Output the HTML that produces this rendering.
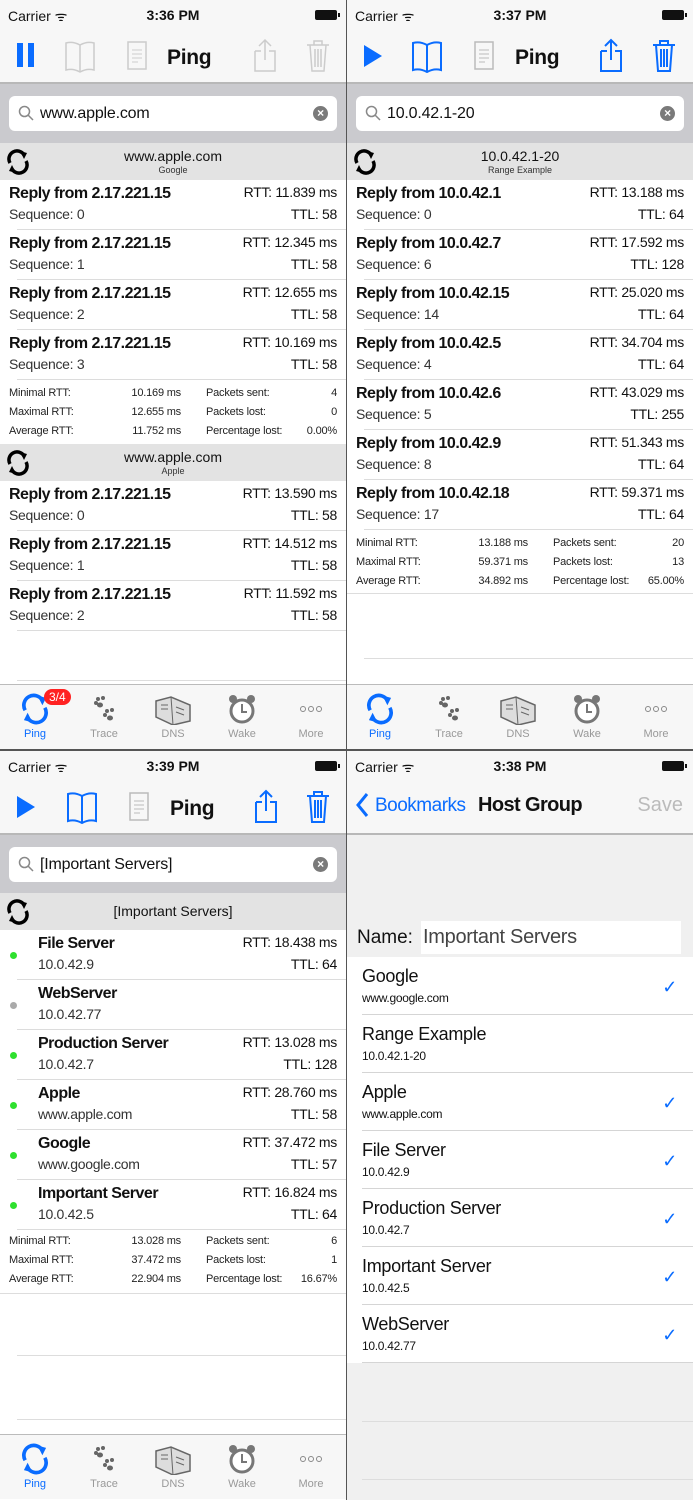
<!DOCTYPE html>
<html><head><meta charset="utf-8"><style>
*{margin:0;padding:0;box-sizing:border-box}
body{width:693px;height:1500px;background:#555;position:relative;overflow:hidden;font-family:"Liberation Sans",sans-serif;color:#111}
.p{position:absolute;width:346px;height:749px;overflow:hidden;background:#fff}
.a{position:absolute}
.sb{position:absolute;left:0;top:0;width:100%;height:30px;background:#f7f7f7;font-size:14px}
.sb .c{position:absolute;left:8px;top:7px}
.sb .t{position:absolute;left:0;width:100%;text-align:center;top:7px;font-weight:bold}
.sb .bat{position:absolute;right:9px;top:10px;width:22px;height:10px;background:#111;border-radius:2px}
.sb .bat:after{content:"";position:absolute;right:-3px;top:3px;width:2px;height:4px;background:#111}
.tb{position:absolute;left:0;top:30px;width:100%;height:54px;background:#f7f7f7;border-bottom:2px solid #b8b8b8}
.ttl{position:absolute;top:16px;font-size:21px;font-weight:bold;letter-spacing:-0.3px}
.sr{position:absolute;left:0;top:84px;width:100%;height:59px;background:#cacace}
.sf{position:absolute;left:9px;right:9px;top:12px;height:35px;background:#fff;border-radius:6px;font-size:16px;letter-spacing:-0.2px}
.sf span{position:absolute;left:31px;top:9px}
.x{position:absolute;right:9px;top:10px;width:15px;height:15px;border-radius:50%;background:#7a7a7a;color:#fff;font-size:12px;line-height:15px;text-align:center;font-weight:bold}
.hd{position:absolute;left:0;width:100%;height:37px;background:#e3e3e3;text-align:center}
.hd .h1{font-size:14px;padding-top:5px}
.hd .h2{font-size:9px;color:#333;margin-top:1px}
.hd svg{position:absolute;left:6px;top:6px}
.r{position:absolute;left:0;width:100%;height:50px;border-bottom:1px solid #dcdcdc;letter-spacing:-0.3px}
.r:after{content:"";position:absolute;left:0;bottom:-1px;width:17px;height:1px;background:#fff}
.r .l1{position:absolute;left:9px;top:5px;font-size:16px;font-weight:bold;letter-spacing:-0.5px}
.r .l2{position:absolute;left:9px;top:26px;font-size:14px;color:#333}
.r .r1{position:absolute;right:9px;top:4px;font-size:14px}
.r .r2{position:absolute;right:9px;top:26px;font-size:14px}
.r .dot{position:absolute;left:10px;top:22px;width:7px;height:7px;border-radius:50%;background:#2ee02e}
.st{position:absolute;left:0;width:100%;height:64px;font-size:11px;color:#222;border-bottom:1px solid #ddd;letter-spacing:-0.2px}
.st div{position:absolute}
.ln{position:absolute;left:17px;right:0;height:1px;background:#ddd}
.tab{position:absolute;left:0;width:100%;height:65px;background:#f7f7f7;border-top:1px solid #bbb}
.ti{position:absolute;top:8px;width:60px;margin-left:-30px;text-align:center;font-size:11px;color:#999}
.ti svg{display:block;margin:0 auto 3px;height:32px}
.ti.on{color:#0a6cff}
.badge{position:absolute;left:44px;top:4px;background:#f22;color:#fff;font-size:12px;border-radius:9px;padding:1px 5px}
.nl{position:absolute;left:0;width:100%;height:58px;background:#fff;letter-spacing:-0.3px}
.nl:after{content:"";position:absolute;left:15px;right:0;bottom:0;height:1px;background:#d5d5d5}
.nl .n{position:absolute;left:15px;top:9px;font-size:18px}
.nl .s{position:absolute;left:15px;top:34px;font-size:12px}
.nl .ck{position:absolute;right:16px;top:20px;color:#0a6cff;font-size:18px}
</style></head><body>

<!-- TOP LEFT -->
<div class="p" style="left:0;top:0">
 <div class="sb"><span class="c">Carrier ᯤ</span><span class="t">3:36 PM</span><span class="bat"></span></div>
 <div class="tb">
  <div class="a" style="left:17px;top:13px;width:6px;height:24px;background:#0a6cff"></div>
  <div class="a" style="left:28px;top:13px;width:6px;height:24px;background:#0a6cff"></div>
  <svg class="a" style="left:64px;top:9px" width="32" height="34" viewBox="0 0 32 34"><path d="M16 6 Q9 2 2 4 V31 Q9 29 16 33 Q23 29 30 31 V4 Q23 2 16 6 V33" fill="none" stroke="#ccc" stroke-width="1.5"/></svg>
  <svg class="a" style="left:127px;top:10px" width="20" height="30"><rect x="1" y="2" width="18" height="27" fill="none" stroke="#ccc" stroke-width="1.5"/><path d="M5 10h10M5 14h10M5 18h10M5 22h6" stroke="#ccc"/></svg>
  <div class="ttl" style="left:167px">Ping</div>
  <svg class="a" style="left:253px;top:8px" width="24" height="34"><path d="M2 13h6M16 13h6v20H2V13M12 2v20M6 8l6-6 6 6" fill="none" stroke="#ccc" stroke-width="1.5"/></svg>
  <svg class="a" style="left:306px;top:8px" width="24" height="34"><path d="M1 7h22M8 7V3h8v4M4 7l2 26h12l2-26M9 11v18M12 11v18M15 11v18" fill="none" stroke="#ccc" stroke-width="1.5"/></svg>
 </div>
 <div class="sr"><div class="sf"><svg class="a" style="left:9px;top:9px" width="16" height="16"><circle cx="6.5" cy="6.5" r="5" fill="none" stroke="#888" stroke-width="1.5"/><path d="M10 10l5 5" stroke="#888" stroke-width="1.5"/></svg><span>www.apple.com</span><div class="x">×</div></div></div>
 <div class="hd" style="top:143px"><svg width="24" height="26" viewBox="0 0 24 26"><path d="M4 14 A8 8 0 0 1 18 6 M20 12 A8 8 0 0 1 6 20" fill="none" stroke="#000" stroke-width="3.5"/><path d="M14 2 L21 4 L18 10Z M10 24 L3 22 L6 16Z"/></svg><div class="h1">www.apple.com</div><div class="h2">Google</div></div>
 <div class="r" style="top:180px"><div class="l1">Reply from 2.17.221.15</div><div class="l2">Sequence: 0</div><div class="r1">RTT: 11.839 ms</div><div class="r2">TTL: 58</div></div>
 <div class="r" style="top:230px"><div class="l1">Reply from 2.17.221.15</div><div class="l2">Sequence: 1</div><div class="r1">RTT: 12.345 ms</div><div class="r2">TTL: 58</div></div>
 <div class="r" style="top:280px"><div class="l1">Reply from 2.17.221.15</div><div class="l2">Sequence: 2</div><div class="r1">RTT: 12.655 ms</div><div class="r2">TTL: 58</div></div>
 <div class="r" style="top:330px"><div class="l1">Reply from 2.17.221.15</div><div class="l2">Sequence: 3</div><div class="r1">RTT: 10.169 ms</div><div class="r2">TTL: 58</div></div>
 <div class="st" style="top:380px;border:0">
  <div style="left:9px;top:7px">Minimal RTT:</div><div style="right:165px;top:7px">10.169 ms</div><div style="left:206px;top:7px">Packets sent:</div><div style="right:9px;top:7px">4</div>
  <div style="left:9px;top:26px">Maximal RTT:</div><div style="right:165px;top:26px">12.655 ms</div><div style="left:206px;top:26px">Packets lost:</div><div style="right:9px;top:26px">0</div>
  <div style="left:9px;top:45px">Average RTT:</div><div style="right:165px;top:45px">11.752 ms</div><div style="left:206px;top:45px">Percentage lost:</div><div style="right:9px;top:45px">0.00%</div>
 </div>
 <div class="hd" style="top:444px"><svg width="24" height="26" viewBox="0 0 24 26"><path d="M4 14 A8 8 0 0 1 18 6 M20 12 A8 8 0 0 1 6 20" fill="none" stroke="#000" stroke-width="3.5"/><path d="M14 2 L21 4 L18 10Z M10 24 L3 22 L6 16Z"/></svg><div class="h1">www.apple.com</div><div class="h2">Apple</div></div>
 <div class="r" style="top:481px"><div class="l1">Reply from 2.17.221.15</div><div class="l2">Sequence: 0</div><div class="r1">RTT: 13.590 ms</div><div class="r2">TTL: 58</div></div>
 <div class="r" style="top:531px"><div class="l1">Reply from 2.17.221.15</div><div class="l2">Sequence: 1</div><div class="r1">RTT: 14.512 ms</div><div class="r2">TTL: 58</div></div>
 <div class="r" style="top:581px"><div class="l1">Reply from 2.17.221.15</div><div class="l2">Sequence: 2</div><div class="r1">RTT: 11.592 ms</div><div class="r2">TTL: 58</div></div>
 <div class="ln" style="top:680px"></div>
 <div class="tab" style="top:684px">
  <div class="ti on" style="left:35px"><svg width="30" height="32" viewBox="0 0 24 26"><path d="M4 14 A8 8 0 0 1 18 6 M20 12 A8 8 0 0 1 6 20" fill="none" stroke="#0a6cff" stroke-width="3"/><path d="M14 2 L21 4 L18 10Z M10 24 L3 22 L6 16Z" fill="#0a6cff"/></svg>Ping</div>
  <div class="badge">3/4</div>
  <div class="ti" style="left:104px"><svg width="30" height="32"><g fill="#666"><circle cx="9" cy="6" r="2"/><circle cx="14" cy="5" r="2"/><circle cx="7" cy="10" r="2"/><ellipse cx="11" cy="12" rx="3" ry="2.5"/><circle cx="18" cy="18" r="2"/><circle cx="23" cy="17" r="2"/><circle cx="16" cy="22" r="2"/><ellipse cx="21" cy="25" rx="3" ry="2.5"/></g></svg>Trace</div>
  <div class="ti" style="left:173px"><svg width="40" height="32"><path d="M3 8 L18 4 L37 12 L37 28 L20 32 L3 24Z" fill="#ddd" stroke="#666" stroke-width="1.5"/><path d="M18 4 L20 32 M8 12h7M8 16h7M23 14l8 3M23 19l8 3" stroke="#666"/></svg>DNS</div>
  <div class="ti" style="left:242px"><svg width="30" height="32"><circle cx="15" cy="18" r="11" fill="#fff" stroke="#777" stroke-width="3"/><circle cx="6" cy="6" r="4" fill="#777"/><circle cx="24" cy="6" r="4" fill="#777"/><path d="M15 11v8h5" stroke="#777" stroke-width="2" fill="none"/></svg>Wake</div>
  <div class="ti" style="left:311px"><svg width="30" height="32"><g fill="none" stroke="#888"><circle cx="7" cy="16" r="2.5"/><circle cx="15" cy="16" r="2.5"/><circle cx="23" cy="16" r="2.5"/></g></svg>More</div>
 </div>
</div>

<!-- TOP RIGHT -->
<div class="p" style="left:347px;top:0">
 <div class="sb"><span class="c">Carrier ᯤ</span><span class="t">3:37 PM</span><span class="bat"></span></div>
 <div class="tb">
  <svg class="a" style="left:16px;top:14px" width="20" height="24"><path d="M1 1L19 12L1 23Z" fill="#0a6cff"/></svg>
  <svg class="a" style="left:64px;top:9px" width="32" height="34" viewBox="0 0 32 34"><path d="M16 6 Q9 2 2 4 V31 Q9 29 16 33 Q23 29 30 31 V4 Q23 2 16 6 V33" fill="none" stroke="#0a6cff" stroke-width="2"/></svg>
  <svg class="a" style="left:127px;top:10px" width="20" height="30"><rect x="1" y="2" width="18" height="27" fill="none" stroke="#bbb" stroke-width="1.5"/><path d="M5 10h10M5 14h10M5 18h10M5 22h6" stroke="#bbb"/></svg>
  <div class="ttl" style="left:168px">Ping</div>
  <svg class="a" style="left:252px;top:8px" width="24" height="34"><path d="M2 13h6M16 13h6v20H2V13M12 2v20M6 8l6-6 6 6" fill="none" stroke="#0a6cff" stroke-width="2"/></svg>
  <svg class="a" style="left:305px;top:8px" width="24" height="34"><path d="M1 7h22M8 7V3h8v4M4 7l2 26h12l2-26M9 11v18M12 11v18M15 11v18" fill="none" stroke="#0a6cff" stroke-width="2"/></svg>
 </div>
 <div class="sr"><div class="sf"><svg class="a" style="left:9px;top:9px" width="16" height="16"><circle cx="6.5" cy="6.5" r="5" fill="none" stroke="#888" stroke-width="1.5"/><path d="M10 10l5 5" stroke="#888" stroke-width="1.5"/></svg><span>10.0.42.1-20</span><div class="x">×</div></div></div>
 <div class="hd" style="top:143px"><svg width="24" height="26" viewBox="0 0 24 26"><path d="M4 14 A8 8 0 0 1 18 6 M20 12 A8 8 0 0 1 6 20" fill="none" stroke="#000" stroke-width="3.5"/><path d="M14 2 L21 4 L18 10Z M10 24 L3 22 L6 16Z"/></svg><div class="h1">10.0.42.1-20</div><div class="h2">Range Example</div></div>
 <div class="r" style="top:180px"><div class="l1">Reply from 10.0.42.1</div><div class="l2">Sequence: 0</div><div class="r1">RTT: 13.188 ms</div><div class="r2">TTL: 64</div></div>
 <div class="r" style="top:230px"><div class="l1">Reply from 10.0.42.7</div><div class="l2">Sequence: 6</div><div class="r1">RTT: 17.592 ms</div><div class="r2">TTL: 128</div></div>
 <div class="r" style="top:280px"><div class="l1">Reply from 10.0.42.15</div><div class="l2">Sequence: 14</div><div class="r1">RTT: 25.020 ms</div><div class="r2">TTL: 64</div></div>
 <div class="r" style="top:330px"><div class="l1">Reply from 10.0.42.5</div><div class="l2">Sequence: 4</div><div class="r1">RTT: 34.704 ms</div><div class="r2">TTL: 64</div></div>
 <div class="r" style="top:380px"><div class="l1">Reply from 10.0.42.6</div><div class="l2">Sequence: 5</div><div class="r1">RTT: 43.029 ms</div><div class="r2">TTL: 255</div></div>
 <div class="r" style="top:430px"><div class="l1">Reply from 10.0.42.9</div><div class="l2">Sequence: 8</div><div class="r1">RTT: 51.343 ms</div><div class="r2">TTL: 64</div></div>
 <div class="r" style="top:480px"><div class="l1">Reply from 10.0.42.18</div><div class="l2">Sequence: 17</div><div class="r1">RTT: 59.371 ms</div><div class="r2">TTL: 64</div></div>
 <div class="st" style="top:530px">
  <div style="left:9px;top:7px">Minimal RTT:</div><div style="right:165px;top:7px">13.188 ms</div><div style="left:206px;top:7px">Packets sent:</div><div style="right:9px;top:7px">20</div>
  <div style="left:9px;top:26px">Maximal RTT:</div><div style="right:165px;top:26px">59.371 ms</div><div style="left:206px;top:26px">Packets lost:</div><div style="right:9px;top:26px">13</div>
  <div style="left:9px;top:45px">Average RTT:</div><div style="right:165px;top:45px">34.892 ms</div><div style="left:206px;top:45px">Percentage lost:</div><div style="right:9px;top:45px">65.00%</div>
 </div>
 <div class="ln" style="top:658px"></div>
 <div class="tab" style="top:684px">
  <div class="ti on" style="left:33px"><svg width="30" height="32" viewBox="0 0 24 26"><path d="M4 14 A8 8 0 0 1 18 6 M20 12 A8 8 0 0 1 6 20" fill="none" stroke="#0a6cff" stroke-width="3"/><path d="M14 2 L21 4 L18 10Z M10 24 L3 22 L6 16Z" fill="#0a6cff"/></svg>Ping</div>
  <div class="ti" style="left:102px"><svg width="30" height="32"><g fill="#666"><circle cx="9" cy="6" r="2"/><circle cx="14" cy="5" r="2"/><circle cx="7" cy="10" r="2"/><ellipse cx="11" cy="12" rx="3" ry="2.5"/><circle cx="18" cy="18" r="2"/><circle cx="23" cy="17" r="2"/><circle cx="16" cy="22" r="2"/><ellipse cx="21" cy="25" rx="3" ry="2.5"/></g></svg>Trace</div>
  <div class="ti" style="left:171px"><svg width="40" height="32"><path d="M3 8 L18 4 L37 12 L37 28 L20 32 L3 24Z" fill="#ddd" stroke="#666" stroke-width="1.5"/><path d="M18 4 L20 32 M8 12h7M8 16h7M23 14l8 3M23 19l8 3" stroke="#666"/></svg>DNS</div>
  <div class="ti" style="left:240px"><svg width="30" height="32"><circle cx="15" cy="18" r="11" fill="#fff" stroke="#777" stroke-width="3"/><circle cx="6" cy="6" r="4" fill="#777"/><circle cx="24" cy="6" r="4" fill="#777"/><path d="M15 11v8h5" stroke="#777" stroke-width="2" fill="none"/></svg>Wake</div>
  <div class="ti" style="left:309px"><svg width="30" height="32"><g fill="none" stroke="#888"><circle cx="7" cy="16" r="2.5"/><circle cx="15" cy="16" r="2.5"/><circle cx="23" cy="16" r="2.5"/></g></svg>More</div>
 </div>
</div>

<!-- BOTTOM LEFT -->
<div class="p" style="left:0;top:751px">
 <div class="sb"><span class="c">Carrier ᯤ</span><span class="t">3:39 PM</span><span class="bat"></span></div>
 <div class="tb">
  <svg class="a" style="left:16px;top:14px" width="20" height="24"><path d="M1 1L19 12L1 23Z" fill="#0a6cff"/></svg>
  <svg class="a" style="left:66px;top:9px" width="32" height="34" viewBox="0 0 32 34"><path d="M16 6 Q9 2 2 4 V31 Q9 29 16 33 Q23 29 30 31 V4 Q23 2 16 6 V33" fill="none" stroke="#0a6cff" stroke-width="2"/></svg>
  <svg class="a" style="left:129px;top:10px" width="20" height="30"><rect x="1" y="2" width="18" height="27" fill="none" stroke="#bbb" stroke-width="1.5"/><path d="M5 10h10M5 14h10M5 18h10M5 22h6" stroke="#bbb"/></svg>
  <div class="ttl" style="left:170px">Ping</div>
  <svg class="a" style="left:254px;top:8px" width="24" height="34"><path d="M2 13h6M16 13h6v20H2V13M12 2v20M6 8l6-6 6 6" fill="none" stroke="#0a6cff" stroke-width="2"/></svg>
  <svg class="a" style="left:306px;top:8px" width="24" height="34"><path d="M1 7h22M8 7V3h8v4M4 7l2 26h12l2-26M9 11v18M12 11v18M15 11v18" fill="none" stroke="#0a6cff" stroke-width="2"/></svg>
 </div>
 <div class="sr"><div class="sf"><svg class="a" style="left:9px;top:9px" width="16" height="16"><circle cx="6.5" cy="6.5" r="5" fill="none" stroke="#888" stroke-width="1.5"/><path d="M10 10l5 5" stroke="#888" stroke-width="1.5"/></svg><span>[Important Servers]</span><div class="x">×</div></div></div>
 <div class="hd" style="top:142px"><svg width="24" height="26" viewBox="0 0 24 26"><path d="M4 14 A8 8 0 0 1 18 6 M20 12 A8 8 0 0 1 6 20" fill="none" stroke="#000" stroke-width="3.5"/><path d="M14 2 L21 4 L18 10Z M10 24 L3 22 L6 16Z"/></svg><div class="h1" style="padding-top:10px">[Important Servers]</div></div>
 <div class="r" style="top:179px"><div class="dot"></div><div class="l1" style="left:38px">File Server</div><div class="l2" style="left:38px">10.0.42.9</div><div class="r1">RTT: 18.438 ms</div><div class="r2">TTL: 64</div></div>
 <div class="r" style="top:229px"><div class="dot" style="background:#aaa"></div><div class="l1" style="left:38px">WebServer</div><div class="l2" style="left:38px">10.0.42.77</div></div>
 <div class="r" style="top:279px"><div class="dot"></div><div class="l1" style="left:38px">Production Server</div><div class="l2" style="left:38px">10.0.42.7</div><div class="r1">RTT: 13.028 ms</div><div class="r2">TTL: 128</div></div>
 <div class="r" style="top:329px"><div class="dot"></div><div class="l1" style="left:38px">Apple</div><div class="l2" style="left:38px">www.apple.com</div><div class="r1">RTT: 28.760 ms</div><div class="r2">TTL: 58</div></div>
 <div class="r" style="top:379px"><div class="dot"></div><div class="l1" style="left:38px">Google</div><div class="l2" style="left:38px">www.google.com</div><div class="r1">RTT: 37.472 ms</div><div class="r2">TTL: 57</div></div>
 <div class="r" style="top:429px"><div class="dot"></div><div class="l1" style="left:38px">Important Server</div><div class="l2" style="left:38px">10.0.42.5</div><div class="r1">RTT: 16.824 ms</div><div class="r2">TTL: 64</div></div>
 <div class="st" style="top:479px">
  <div style="left:9px;top:5px">Minimal RTT:</div><div style="right:165px;top:5px">13.028 ms</div><div style="left:206px;top:5px">Packets sent:</div><div style="right:9px;top:5px">6</div>
  <div style="left:9px;top:24px">Maximal RTT:</div><div style="right:165px;top:24px">37.472 ms</div><div style="left:206px;top:24px">Packets lost:</div><div style="right:9px;top:24px">1</div>
  <div style="left:9px;top:43px">Average RTT:</div><div style="right:165px;top:43px">22.904 ms</div><div style="left:206px;top:43px">Percentage lost:</div><div style="right:9px;top:43px">16.67%</div>
 </div>
 <div class="ln" style="top:604px"></div>
 <div class="ln" style="top:668px"></div>
 <div class="tab" style="top:683px">
  <div class="ti on" style="left:35px"><svg width="30" height="32" viewBox="0 0 24 26"><path d="M4 14 A8 8 0 0 1 18 6 M20 12 A8 8 0 0 1 6 20" fill="none" stroke="#0a6cff" stroke-width="3"/><path d="M14 2 L21 4 L18 10Z M10 24 L3 22 L6 16Z" fill="#0a6cff"/></svg>Ping</div>
  <div class="ti" style="left:104px"><svg width="30" height="32"><g fill="#666"><circle cx="9" cy="6" r="2"/><circle cx="14" cy="5" r="2"/><circle cx="7" cy="10" r="2"/><ellipse cx="11" cy="12" rx="3" ry="2.5"/><circle cx="18" cy="18" r="2"/><circle cx="23" cy="17" r="2"/><circle cx="16" cy="22" r="2"/><ellipse cx="21" cy="25" rx="3" ry="2.5"/></g></svg>Trace</div>
  <div class="ti" style="left:173px"><svg width="40" height="32"><path d="M3 8 L18 4 L37 12 L37 28 L20 32 L3 24Z" fill="#ddd" stroke="#666" stroke-width="1.5"/><path d="M18 4 L20 32 M8 12h7M8 16h7M23 14l8 3M23 19l8 3" stroke="#666"/></svg>DNS</div>
  <div class="ti" style="left:242px"><svg width="30" height="32"><circle cx="15" cy="18" r="11" fill="#fff" stroke="#777" stroke-width="3"/><circle cx="6" cy="6" r="4" fill="#777"/><circle cx="24" cy="6" r="4" fill="#777"/><path d="M15 11v8h5" stroke="#777" stroke-width="2" fill="none"/></svg>Wake</div>
  <div class="ti" style="left:311px"><svg width="30" height="32"><g fill="none" stroke="#888"><circle cx="7" cy="16" r="2.5"/><circle cx="15" cy="16" r="2.5"/><circle cx="23" cy="16" r="2.5"/></g></svg>More</div>
 </div>
</div>

<!-- BOTTOM RIGHT -->
<div class="p" style="left:347px;top:751px;background:#f0f0f0">
 <div class="sb"><span class="c">Carrier ᯤ</span><span class="t">3:38 PM</span><span class="bat"></span></div>
 <div class="tb">
  <svg class="a" style="left:8px;top:11px" width="14" height="26"><path d="M12 2L3 13L12 24" fill="none" stroke="#0a6cff" stroke-width="3"/></svg>
  <div class="a" style="left:28px;top:14px;font-size:19px;letter-spacing:-0.5px;color:#0a6cff">Bookmarks</div>
  <div class="a" style="left:131px;top:13px;font-size:20px;font-weight:bold;letter-spacing:-0.6px">Host Group</div>
  <div class="a" style="right:10px;top:13px;font-size:20px;color:#bbb">Save</div>
 </div>
 <div class="a" style="left:10px;top:176px;font-size:19px">Name:</div>
 <div class="a" style="left:74px;top:170px;width:260px;height:33px;background:#fff;font-size:20px;color:#444;padding:5px 2px;letter-spacing:-0.3px">Important Servers</div>
 <div class="nl" style="top:206px"><div class="n">Google</div><div class="s">www.google.com</div><div class="ck">✓</div></div>
 <div class="nl" style="top:264px"><div class="n">Range Example</div><div class="s">10.0.42.1-20</div></div>
 <div class="nl" style="top:322px"><div class="n">Apple</div><div class="s">www.apple.com</div><div class="ck">✓</div></div>
 <div class="nl" style="top:380px"><div class="n">File Server</div><div class="s">10.0.42.9</div><div class="ck">✓</div></div>
 <div class="nl" style="top:438px"><div class="n">Production Server</div><div class="s">10.0.42.7</div><div class="ck">✓</div></div>
 <div class="nl" style="top:496px"><div class="n">Important Server</div><div class="s">10.0.42.5</div><div class="ck">✓</div></div>
 <div class="nl" style="top:554px"><div class="n">WebServer</div><div class="s">10.0.42.77</div><div class="ck">✓</div></div>
 <div class="ln" style="top:670px;background:#ddd;left:15px"></div>
 <div class="ln" style="top:728px;background:#ddd;left:15px"></div>
</div>
</body></html>
